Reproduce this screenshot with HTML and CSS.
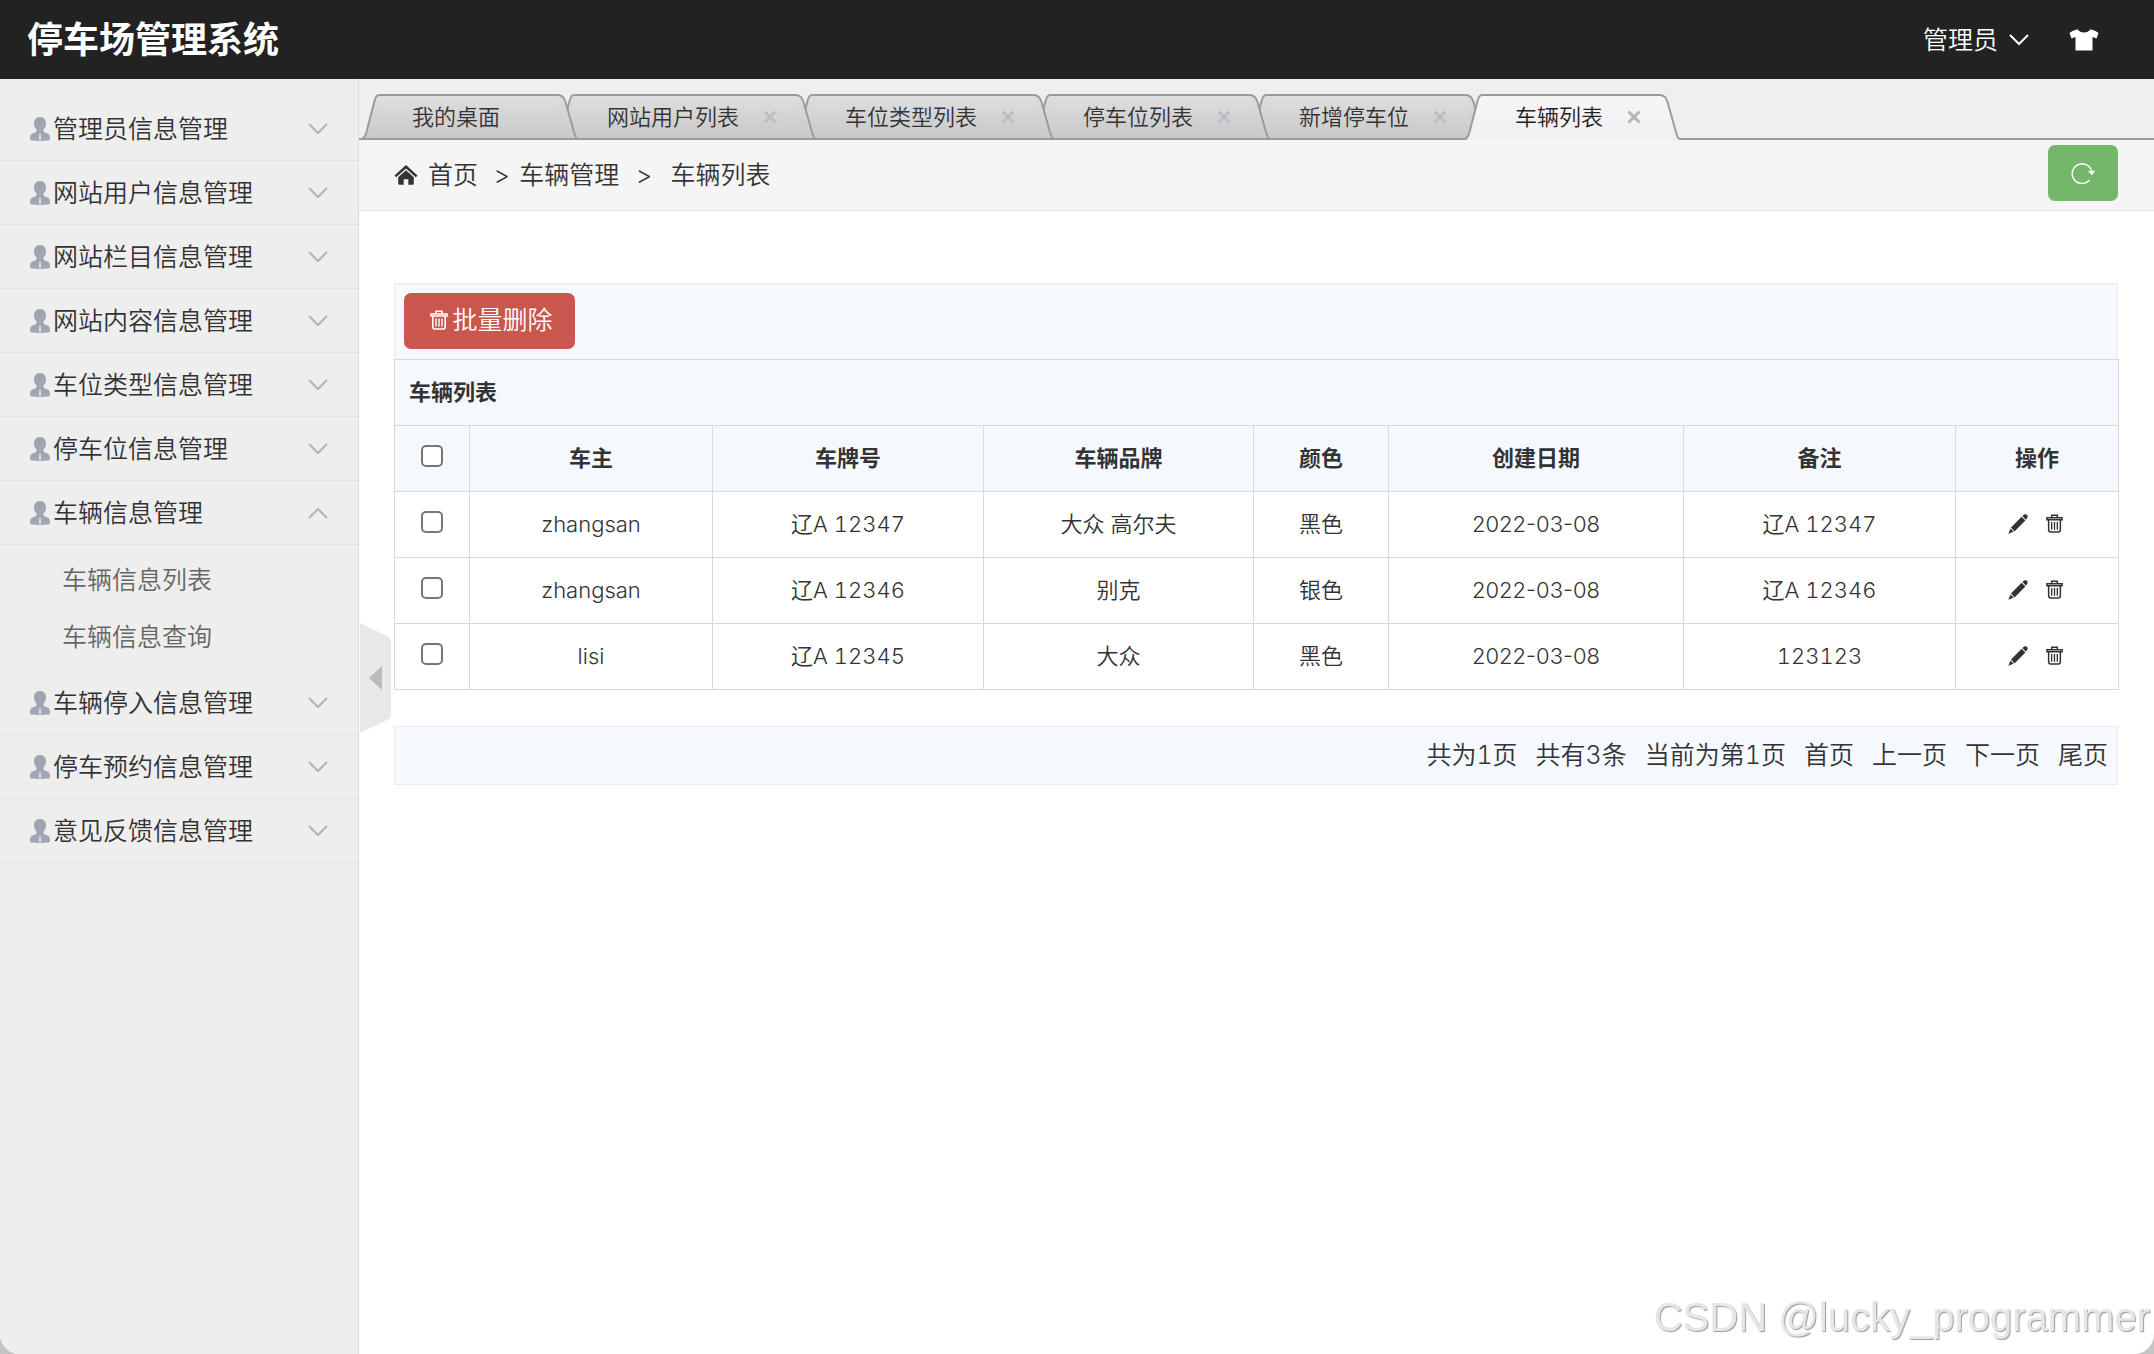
FILE: index.html
```html
<!DOCTYPE html>
<html lang="zh-CN">
<head>
<meta charset="utf-8">
<meta name="viewport" content="width=device-width, initial-scale=1">
<title>停车场管理系统</title>
<link rel="stylesheet" href="styles.css">
</head>
<body>
<svg class="sprite" aria-hidden="true">
  <symbol id="i-user" viewBox="0 0 20 24"><path d="M10 0c3.800 0 6 2.600 6 6.300 0 2.500-.8 4.600-2.200 6-.6.600-.7 2.200.200 2.800 1.300.8 3.600 1.100 4.700 2.100.9.900 1.300 2.400 1.300 4.800 0 1-.8 1.500-2 1.600-5 .5-11 .5-16 0-1.200-.1-2-.6-2-1.600 0-2.400.4-3.900 1.300-4.800 1.100-1 3.400-1.300 4.700-2.100.9-.6.800-2.200.200-2.800C4.800 10.900 4 8.800 4 6.300 4 2.600 6.200 0 10 0z" fill="currentColor"/><path d="M9.200 17h1.600l-.3 1.500.5 3.500-1 1.200-1-1.200.5-3.500z" fill="#eee"/></symbol>
  <symbol id="i-down" viewBox="0 0 20 12"><path d="M1 1l9 9 9-9" fill="none" stroke="currentColor" stroke-width="2"/></symbol>
  <symbol id="i-up" viewBox="0 0 20 12"><path d="M1 11l9-9 9 9" fill="none" stroke="currentColor" stroke-width="2"/></symbol>
  <symbol id="i-shirt" viewBox="0 0 30 22"><path d="M9 .5c1.500 4 10.500 4 12 0 3 .3 5.500 1.200 8.500 3.500L27.500 9.500 23.500 8v13.500h-17V8L2.500 9.500.5 4C3.500 1.700 6 .8 9 .5z" fill="currentColor"/></symbol>
  <symbol id="i-home" viewBox="0 0 24 20"><path d="M12 0l11.500 10.500-1.700 1.700L12 3.400l-9.800 8.800-1.700-1.700z" fill="currentColor"/><path d="M12 5.300l7.800 7V18.500c0 .8-.4 1.200-1.200 1.200h-4.300v-5.500H9.700v5.500H5.400c-.8 0-1.200-.4-1.200-1.200v-6.200z" fill="currentColor"/></symbol>
  <symbol id="i-refresh" viewBox="0 0 24 22"><path d="M18.500 18A9.800 9.800 0 1 1 20.800 11" fill="none" stroke="currentColor" stroke-width="1.500"/><path d="M17.600 9.300c2 .9 3.700.7 6-.5l-2.600 4z" fill="currentColor" stroke="currentColor"/></symbol>
  <symbol id="i-trash" viewBox="0 0 18 20"><path d="M6 3.500V1.300h6v2.200M1 4h16v2H1zM2.800 6.500v10.200c0 1.500.8 2.300 2.200 2.300h8c1.400 0 2.200-.8 2.200-2.300V6.500" fill="none" stroke="currentColor" stroke-width="1.600"/><path d="M6 8.500v8M9 8.500v8M12 8.500v8" fill="none" stroke="currentColor" stroke-width="1.400"/></symbol>
  <symbol id="i-pencil" viewBox="0 0 20 20"><path d="M13.600 2.800l3.800 3.700L6.500 17.500l-3.500-3.900zM14.400 2c1.200-1.200 2.600-2 3.900-1.500 1.400.6 1.800 2.200.8 3.600l-1.200 1.600zM2.500 14.500l3.100 3.300-5.300 2z" fill="currentColor"/></symbol>
  <symbol id="i-close" viewBox="0 0 14 14"><path d="M1.500 1.500l11 11M12.500 1.500l-11 11" fill="none" stroke="currentColor" stroke-width="3"/></symbol>
  <symbol id="cap-l" viewBox="0 0 18 46"><path d="M0 46c3 0 3-4 4-7L12.500 7C14 2 15 1 18 1V46z" fill="var(--fill)"/><path d="M0 45h18" stroke="var(--base)" stroke-width="2"/><path d="M0 45c3-1 3.500-4 4.500-7L12.500 7C14 2 15 1 18 1" fill="none" stroke="#9b9b9b" stroke-width="2"/></symbol>
  <symbol id="cap-r" viewBox="0 0 20 46"><path d="M0 1c4 0 6 2 7.500 7L16 39c1 3 1 6 4 7H0z" fill="var(--fill)"/><path d="M0 45h20" stroke="var(--base)" stroke-width="2"/><path d="M0 1c4 0 6 2 7.500 7L16 38c1 3 1 6 4 7" fill="none" stroke="#9b9b9b" stroke-width="2"/></symbol>
  <linearGradient id="g-idle" x1="0" y1="0" x2="0" y2="46" gradientUnits="userSpaceOnUse"><stop offset="0" stop-color="#dfdfe0"/><stop offset="1" stop-color="#c8c8c9"/></linearGradient>
  <linearGradient id="g-active" x1="0" y1="0" x2="0" y2="46" gradientUnits="userSpaceOnUse"><stop offset="0" stop-color="#f6f6f7"/><stop offset="1" stop-color="#f0eff1"/></linearGradient>
</svg>

<div class="app">
  <header class="topbar">
    <a class="brand" href="#">停车场管理系统</a>
    <div class="topbar-actions">
      <button class="account" type="button">管理员<svg class="chevron"><use href="#i-down"/></svg></button>
      <button class="skin" type="button" aria-label="换肤"><svg><use href="#i-shirt"/></svg></button>
    </div>
  </header>

  <div class="body">
    <nav class="sidebar">
      <button class="group" type="button"><svg class="user"><use href="#i-user"/></svg><span>管理员信息管理</span><svg class="chevron"><use href="#i-down"/></svg></button>
      <button class="group" type="button"><svg class="user"><use href="#i-user"/></svg><span>网站用户信息管理</span><svg class="chevron"><use href="#i-down"/></svg></button>
      <button class="group" type="button"><svg class="user"><use href="#i-user"/></svg><span>网站栏目信息管理</span><svg class="chevron"><use href="#i-down"/></svg></button>
      <button class="group" type="button"><svg class="user"><use href="#i-user"/></svg><span>网站内容信息管理</span><svg class="chevron"><use href="#i-down"/></svg></button>
      <button class="group" type="button"><svg class="user"><use href="#i-user"/></svg><span>车位类型信息管理</span><svg class="chevron"><use href="#i-down"/></svg></button>
      <button class="group" type="button"><svg class="user"><use href="#i-user"/></svg><span>停车位信息管理</span><svg class="chevron"><use href="#i-down"/></svg></button>
      <button class="group" type="button" aria-expanded="true"><svg class="user"><use href="#i-user"/></svg><span>车辆信息管理</span><svg class="chevron"><use href="#i-up"/></svg></button>
      <ul class="submenu">
        <li><a href="#">车辆信息列表</a></li>
        <li><a href="#">车辆信息查询</a></li>
      </ul>
      <button class="group" type="button"><svg class="user"><use href="#i-user"/></svg><span>车辆停入信息管理</span><svg class="chevron"><use href="#i-down"/></svg></button>
      <button class="group" type="button"><svg class="user"><use href="#i-user"/></svg><span>停车预约信息管理</span><svg class="chevron"><use href="#i-down"/></svg></button>
      <button class="group" type="button"><svg class="user"><use href="#i-user"/></svg><span>意见反馈信息管理</span><svg class="chevron"><use href="#i-down"/></svg></button>
    </nav>

    <main class="main">
      <ul class="tabs">
        <li class="tab"><svg class="cap-l"><use href="#cap-l"/></svg><div class="tab-mid"><a href="#">我的桌面</a></div><svg class="cap-r"><use href="#cap-r"/></svg></li>
        <li class="tab"><svg class="cap-l"><use href="#cap-l"/></svg><div class="tab-mid"><a href="#">网站用户列表</a><button type="button" aria-label="关闭"><svg><use href="#i-close"/></svg></button></div><svg class="cap-r"><use href="#cap-r"/></svg></li>
        <li class="tab"><svg class="cap-l"><use href="#cap-l"/></svg><div class="tab-mid"><a href="#">车位类型列表</a><button type="button" aria-label="关闭"><svg><use href="#i-close"/></svg></button></div><svg class="cap-r"><use href="#cap-r"/></svg></li>
        <li class="tab"><svg class="cap-l"><use href="#cap-l"/></svg><div class="tab-mid"><a href="#">停车位列表</a><button type="button" aria-label="关闭"><svg><use href="#i-close"/></svg></button></div><svg class="cap-r"><use href="#cap-r"/></svg></li>
        <li class="tab"><svg class="cap-l"><use href="#cap-l"/></svg><div class="tab-mid"><a href="#">新增停车位</a><button type="button" aria-label="关闭"><svg><use href="#i-close"/></svg></button></div><svg class="cap-r"><use href="#cap-r"/></svg></li>
        <li class="tab active"><svg class="cap-l"><use href="#cap-l"/></svg><div class="tab-mid"><a href="#">车辆列表</a><button type="button" aria-label="关闭"><svg><use href="#i-close"/></svg></button></div><svg class="cap-r"><use href="#cap-r"/></svg></li>
      </ul>

      <div class="crumbs">
        <svg class="home"><use href="#i-home"/></svg>
        <a href="#">首页</a><span class="sep">&gt;</span><span>车辆管理</span><span class="sep wide">&gt;</span><span>车辆列表</span>
        <button class="refresh" type="button" aria-label="刷新"><svg><use href="#i-refresh"/></svg></button>
      </div>

      <section class="content">
        <div class="toolbar">
          <button class="delete" type="button"><svg><use href="#i-trash"/></svg>批量删除</button>
        </div>
        <table class="grid">
          <colgroup><col class="c-check"><col class="c-owner"><col class="c-plate"><col class="c-brand"><col class="c-color"><col class="c-date"><col class="c-note"><col class="c-ops"></colgroup>
          <thead>
            <tr><th class="caption" colspan="8">车辆列表</th></tr>
            <tr><th><input type="checkbox" aria-label="全选"></th><th>车主</th><th>车牌号</th><th>车辆品牌</th><th>颜色</th><th>创建日期</th><th>备注</th><th>操作</th></tr>
          </thead>
          <tbody>
            <tr><td><input type="checkbox" aria-label="选择 12347"></td><td>zhangsan</td><td>辽A 12347</td><td>大众 高尔夫</td><td>黑色</td><td class="date">2022-03-08</td><td>辽A 12347</td><td><div class="ops"><a href="#" aria-label="编辑"><svg class="pencil"><use href="#i-pencil"/></svg></a><a href="#" aria-label="删除"><svg class="trash"><use href="#i-trash"/></svg></a></div></td></tr>
            <tr><td><input type="checkbox" aria-label="选择 12346"></td><td>zhangsan</td><td>辽A 12346</td><td>别克</td><td>银色</td><td class="date">2022-03-08</td><td>辽A 12346</td><td><div class="ops"><a href="#" aria-label="编辑"><svg class="pencil"><use href="#i-pencil"/></svg></a><a href="#" aria-label="删除"><svg class="trash"><use href="#i-trash"/></svg></a></div></td></tr>
            <tr><td><input type="checkbox" aria-label="选择 12345"></td><td>lisi</td><td>辽A 12345</td><td>大众</td><td>黑色</td><td class="date">2022-03-08</td><td>123123</td><td><div class="ops"><a href="#" aria-label="编辑"><svg class="pencil"><use href="#i-pencil"/></svg></a><a href="#" aria-label="删除"><svg class="trash"><use href="#i-trash"/></svg></a></div></td></tr>
          </tbody>
        </table>
        <div class="pager">
          <span>共为1页</span><span>共有3条</span><span>当前为第1页</span><a href="#">首页</a><a href="#">上一页</a><a href="#">下一页</a><a href="#">尾页</a>
        </div>
      </section>
    </main>
  </div>

  <button class="collapse" type="button" aria-label="收起菜单"><svg viewBox="0 0 31 110"><path d="M0 0l25 12c4 2 6 3 6 6v74c0 3-2 4-6 6L0 110z" fill="#e8e8e8"/><path d="M9 55l13-12v24z" fill="#bbb"/></svg></button>
  <div class="watermark">CSDN @lucky_programmer</div>
</div>
</body>
</html>
```

FILE: styles.css
```css
* { box-sizing: border-box; }

body {
  margin: 0;
  background: #c4c4c4;
  color: #333;
  font-family: Inter, "Noto Sans CJK SC", sans-serif;
  font-size: 25px;
  font-weight: 350;
  font-variant-numeric: tabular-nums;
  line-height: 36px;
}

a { color: inherit; text-decoration: none; }
ul { margin: 0; padding: 0; list-style: none; }
button { margin: 0; padding: 0; border: 0; background: none; color: inherit; font: inherit; cursor: pointer; }
svg { display: block; flex: none; }
.sprite { position: absolute; width: 0; height: 0; }

.app {
  display: flex;
  flex-direction: column;
  min-height: 100vh;
  overflow: hidden;
  background: #fff;
  border-radius: 0 0 20px 20px;
}

/* Top bar */
.topbar {
  display: flex;
  align-items: center;
  justify-content: space-between;
  height: 79px;
  padding: 0 55px 0 27px;
  background: #222;
  color: #fff;
}
.brand { font-size: 36px; font-weight: 700; line-height: 52px; }
.topbar-actions { display: flex; align-items: center; gap: 40px; }
.account { display: flex; align-items: center; gap: 11px; }
.chevron { width: 20px; height: 12px; }
.skin svg { width: 30px; height: 22px; }

.body { display: flex; flex: 1; }

/* Sidebar */
.sidebar {
  flex: none;
  width: 359px;
  padding-top: 18px;
  background: #eee;
  border-right: 1px solid #ddd;
}
.group {
  display: flex;
  align-items: center;
  width: 100%;
  height: 64px;
  padding: 0 30px;
  border-bottom: 1px solid #e2e2e2;
  text-align: left;
}
.group span { flex: 1; margin-left: 3px; }
.group .chevron { color: #b4b4b4; }
.user { width: 20px; height: 24px; color: #a0a5b1; }
.submenu { padding: 7px 0 5px 62px; color: #666; }
.submenu a { display: block; line-height: 57px; }

.main { flex: 1; min-width: 0; }

/* Tabs */
.tabs {
  display: flex;
  height: 61px;
  padding: 15px 0 0 3px;
  background: linear-gradient(#9b9b9b, #9b9b9b) left bottom / 100% 2px no-repeat, #efeff1;
}
.tab {
  --fill: url(#g-idle);
  --base: #9b9b9b;
  --top: #dfdfe0;
  --bottom: #c8c8c9;
  display: flex;
  height: 46px;
  font-size: 22px;
}
.tab + .tab { margin-left: -21px; }
.tab:first-child { min-width: 216px; z-index: 5; }
.tab:nth-child(2) { z-index: 4; }
.tab:nth-child(3) { z-index: 3; }
.tab:nth-child(4) { z-index: 2; }
.tab:nth-child(5) { z-index: 1; }
.tab.active { --fill: url(#g-active); --base: none; --top: #f6f6f7; --bottom: #f0eff1; z-index: 6; color: #222; }
.cap-l { width: 18px; height: 46px; }
.cap-r { width: 20px; height: 46px; }
.tab-mid {
  display: flex;
  flex: 1;
  align-items: center;
  gap: 24px;
  padding: 0 19px 0 32px;
  border-top: 2px solid #9b9b9b;
  border-bottom: 2px solid #9b9b9b;
  background: linear-gradient(var(--top), var(--bottom));
}
.tab.active .tab-mid { border-bottom-color: #f0eff1; }
.tab-mid button { color: #bbbfc5; }
.tab-mid button svg { width: 14px; height: 14px; }
.tab.active button { color: #b3b7bd; }

/* Breadcrumbs */
.crumbs {
  display: flex;
  align-items: center;
  height: 71px;
  padding: 0 36px 0 35px;
  background: #f5f5f5;
  border-bottom: 1px solid #e0e0e0;
}
.home { width: 24px; height: 20px; margin-right: 10px; }
.sep { padding: 0 9px 0 16px; }
.sep.wide { padding: 0 18px 0 17px; }
.refresh {
  display: grid;
  place-items: center;
  width: 70px;
  height: 56px;
  margin: 0 0 4px auto;
  border-radius: 7px;
  background: #74b66a;
  color: #fff;
}
.refresh svg { width: 24px; height: 22px; }

/* Content */
.content { padding: 72px 36px 36px 35px; }
.toolbar {
  padding: 9px 9px 10px;
  border: 1px solid #e9ebee;
  border-bottom: 0;
  background: #f5f9fe;
}
.delete {
  display: flex;
  align-items: center;
  justify-content: center;
  gap: 4px;
  width: 171px;
  height: 56px;
  padding: 0 0 2px 4px;
  border-radius: 7px;
  background: #ca574e;
  color: #fff;
}
.delete svg { width: 18px; height: 20px; }

.grid {
  width: 100%;
  border-collapse: collapse;
  table-layout: fixed;
  font-size: 22px;
}
.c-check { width: 75px; }
.c-owner { width: 243px; }
.c-plate { width: 271px; }
.c-brand { width: 270px; }
.c-color { width: 135px; }
.c-date { width: 295px; }
.c-note { width: 272px; }
.c-ops { width: 163px; }
.grid th, .grid td {
  height: 66px;
  padding: 0 14px 2px;
  border: 1px solid #d9d9d9;
  text-align: center;
  vertical-align: middle;
}
.grid th { background: #f5f9fe; font-weight: 700; }
.grid .caption { text-align: left; }
.grid .date { font-variant-numeric: normal; }
.grid input {
  display: block;
  width: 22px;
  height: 22px;
  margin: 0 auto 3px;
  appearance: none;
  border: 2px solid #767676;
  border-radius: 5px;
  background: #fff;
}
.ops { display: flex; justify-content: center; gap: 18px; padding-right: 3px; }
.pencil { width: 20px; height: 20px; }
.trash { width: 17px; height: 19px; }

.pager {
  display: flex;
  align-items: center;
  justify-content: flex-end;
  gap: 18px;
  height: 59px;
  margin-top: 36px;
  padding: 0 9px 1px;
  border: 1px solid #e9ebee;
  background: #f5f9fe;
}

/* Overlays */
.collapse { position: fixed; top: 50%; left: 360px; margin-top: -54px; }
.collapse svg { width: 31px; height: 110px; }
.watermark {
  position: fixed;
  right: 4px;
  bottom: 14px;
  color: #e6e6e6;
  font: 40px/46px "Liberation Sans", sans-serif;
  text-shadow: 1px 1px 1px #999;
}
```
